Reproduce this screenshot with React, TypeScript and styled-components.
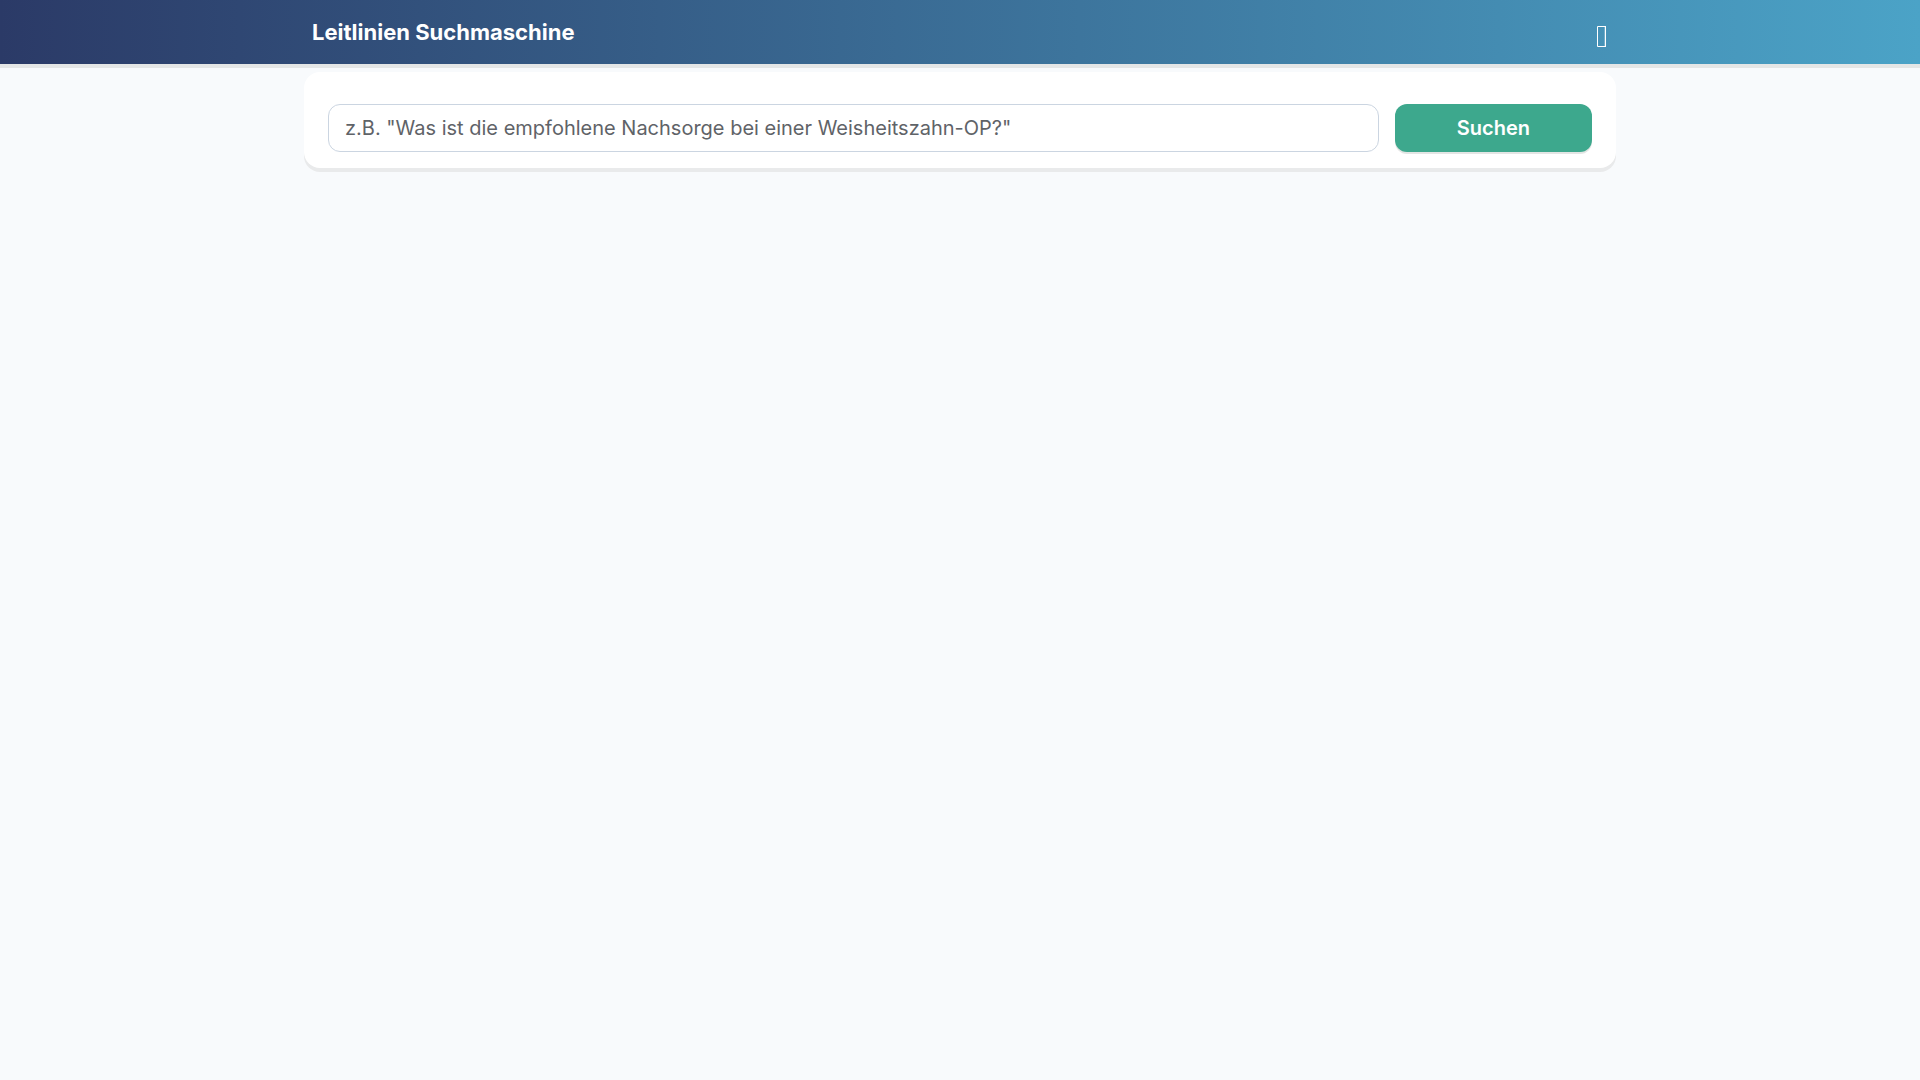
import React from "react";
import styled, { createGlobalStyle } from "styled-components";

const GlobalStyle = createGlobalStyle`
  *, *::before, *::after { box-sizing: border-box; }
  body {
    margin: 0;
    background: #f8fafc;
    color: #212529;
    font-family: Inter, "Liberation Sans", sans-serif;
    font-size: 20px;
    line-height: 24px;
  }
`;

const Page = styled.div`
  min-height: 100vh;
  background: #f8fafc;
`;

const Header = styled.header`
  background: linear-gradient(90deg, #2b3a67 0%, #4ba3c7 100%);
  box-shadow: 0 4px 0 #e4e6e6;
  padding: 8px 0;
`;

const Container = styled.div`
  width: 100%;
  max-width: 1312px;
  margin: 0 auto;
`;

const HeaderRow = styled.div`
  display: flex;
  align-items: center;
  justify-content: space-between;
  height: 48px;
  padding: 0 8px;
`;

const Title = styled.h1`
  margin: 0;
  color: #fff;
  font-size: 22px;
  line-height: 32px;
  font-weight: 700;
`;

const MenuButton = styled.button`
  display: flex;
  padding: 8px 0 0;
  border: 0;
  background: none;
  color: #fff;
  cursor: pointer;
`;

const Card = styled.section`
  margin-top: 8px;
  padding: 32px 24px 16px;
  border-radius: 16px;
  background: #fff;
  box-shadow: 0 4px 0 #e9eaeb;
`;

const SearchForm = styled.form`
  display: grid;
  grid-template-columns: minmax(0, 16fr) minmax(0, 3fr);
  gap: 16px;
`;

const SearchInput = styled.input`
  width: 100%;
  height: 48px;
  padding: 0 16px;
  border: 1px solid #cbd5e1;
  border-radius: 12px;
  background: #fff;
  color: #212529;
  font: inherit;
  &::placeholder { color: #5f6368; opacity: 1; }
`;

const SearchButton = styled.button`
  height: 48px;
  border: 0;
  border-radius: 12px;
  background: #3da88d;
  box-shadow: 0 2px 0 #e3e5e4;
  color: #fff;
  font: inherit;
  font-weight: 600;
  cursor: pointer;
`;

export default function App() {
  return (
    <Page>
      <GlobalStyle />
      <Header>
        <Container>
          <HeaderRow>
            <Title>Leitlinien Suchmaschine</Title>
            <MenuButton type="button" aria-label="Info">
              <svg width="12" height="24" viewBox="0 0 12 24" fill="none" stroke="currentColor">
                <path d="M9.5 2.5H1.5V22.5H9.5" />
                <path d="M9.5 2V23" />
                <path d="M8.5 3V22" strokeOpacity="0.25" />
              </svg>
            </MenuButton>
          </HeaderRow>
        </Container>
      </Header>
      <Container as="main">
        <Card>
          <SearchForm onSubmit={(e) => e.preventDefault()}>
            <SearchInput
              type="text"
              aria-label="Suchanfrage"
              placeholder={'z.B. "Was ist die empfohlene Nachsorge bei einer Weisheitszahn-OP?"'}
            />
            <SearchButton type="submit">Suchen</SearchButton>
          </SearchForm>
        </Card>
      </Container>
    </Page>
  );
}
